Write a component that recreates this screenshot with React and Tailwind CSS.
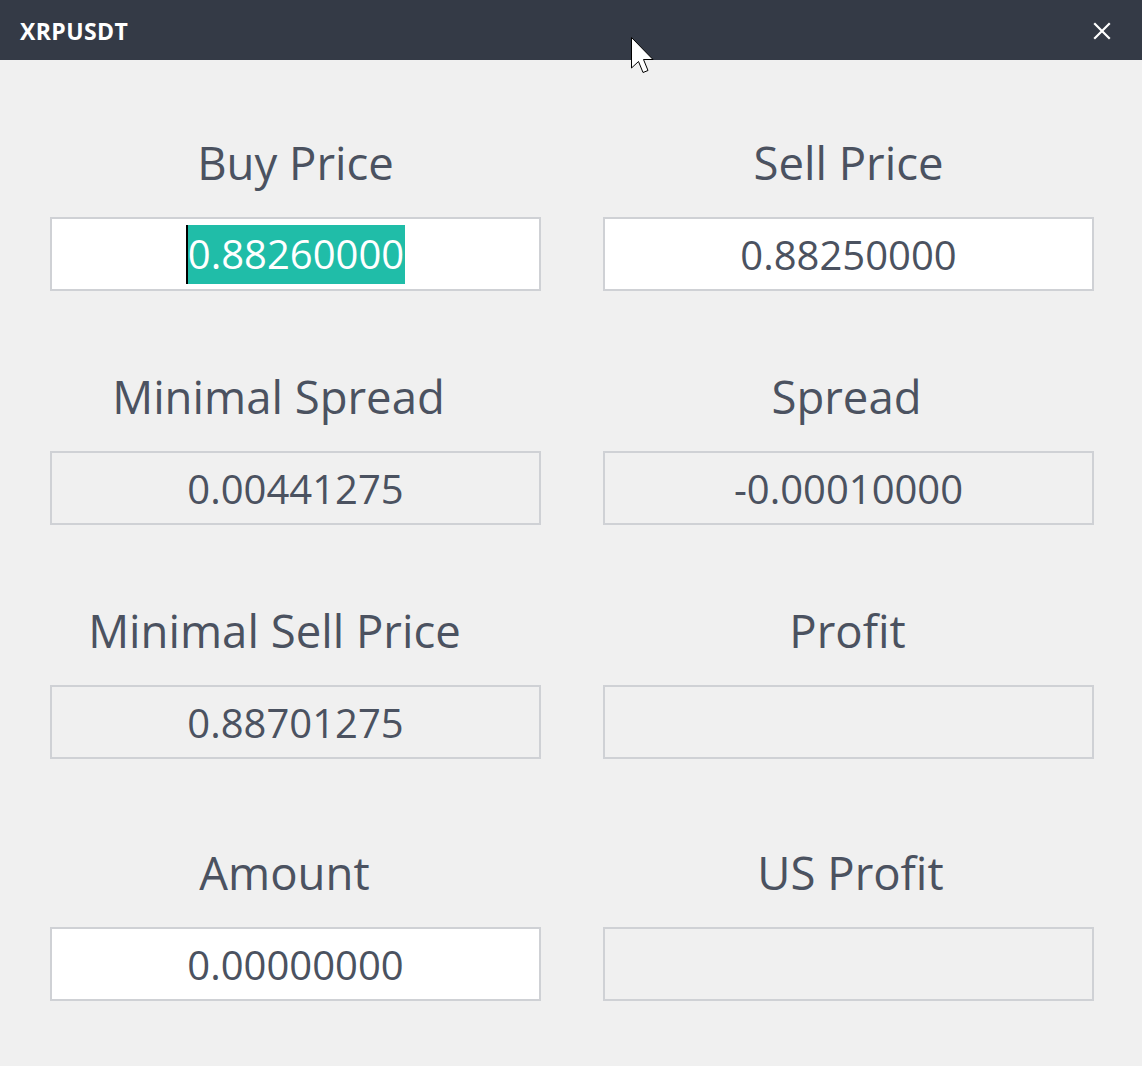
import React from "react";

const font = { fontFamily: '"Open Sans", "Noto Sans", sans-serif' };

function Field({ label, value, editable, selected, last, shift = "" }) {
  return (
    <div className={`flex flex-col ${last ? "mt-[83px]" : ""}`}>
      <div className="h-[60px] flex items-center justify-center text-[45.5px] text-[#4b5260] whitespace-nowrap">
        <span className={shift}>{label}</span>
      </div>
      <div
        className={`mt-[25px] h-[74px] border-2 border-[#cfd1d5] flex items-center justify-center text-[40px] text-[#4b5260] ${
          editable ? "bg-white" : "bg-[#f0f0f0]"
        }`}
      >
        {selected ? (
          <span className="relative flex items-center">
            <span className="w-[2px] h-[59px] bg-black" />
            <span className="bg-[#20bda8] text-white h-[59px] flex items-center pr-[1px]">{value}</span>
          </span>
        ) : (
          <span className="pt-[2px]">{value}</span>
        )}
      </div>
    </div>
  );
}

export default function App() {
  return (
    <div className="relative w-[1142px] h-[1066px] bg-[#f0f0f0] overflow-hidden" style={font}>
      <div className="h-[60px] bg-[#343a46] flex items-center justify-between pl-[20px] pr-[31px]">
        <span className="text-white font-bold text-[23px] tracking-[0.4px] pt-[3px]">XRPUSDT</span>
        <svg width="18" height="18" viewBox="0 0 18 18" className="mt-[1px]">
          <path d="M2 2 L16 16 M16 2 L2 16" stroke="white" strokeWidth="2.2" strokeLinecap="square" />
        </svg>
      </div>
      <div className="grid grid-cols-[491px_491px] gap-x-[62px] pl-[50px] pt-[72px]">
        <div className="flex flex-col gap-[75px]">
          <Field label="Buy Price" value="0.88260000" editable selected />
          <Field label="Minimal Spread" value="0.00441275" shift="mr-[34px]" />
          <Field label="Minimal Sell Price" value="0.88701275" shift="mr-[42px]" />
          <div className="-mt-[75px]">
            <Field label="Amount" value="0.00000000" editable last shift="mr-[22px]" />
          </div>
        </div>
        <div className="flex flex-col gap-[75px]">
          <Field label="Sell Price" value="0.88250000" editable />
          <Field label="Spread" value="-0.00010000" shift="mr-[4px]" />
          <Field label="Profit" value="" shift="mr-[2px]" />
          <div className="-mt-[75px]">
            <Field label="US Profit" value="" last shift="ml-[4px]" />
          </div>
        </div>
      </div>
      <svg className="absolute left-[631px] top-[37px]" width="26" height="38" viewBox="0 0 26 38">
        <path
          d="M0.5 0.5 L0.5 31 L7.5 24.5 L12 35.5 L17 33.5 L12.5 22.5 L22 22.5 Z"
          fill="white"
          stroke="black"
          strokeWidth="1"
          strokeLinejoin="miter"
        />
      </svg>
    </div>
  );
}
